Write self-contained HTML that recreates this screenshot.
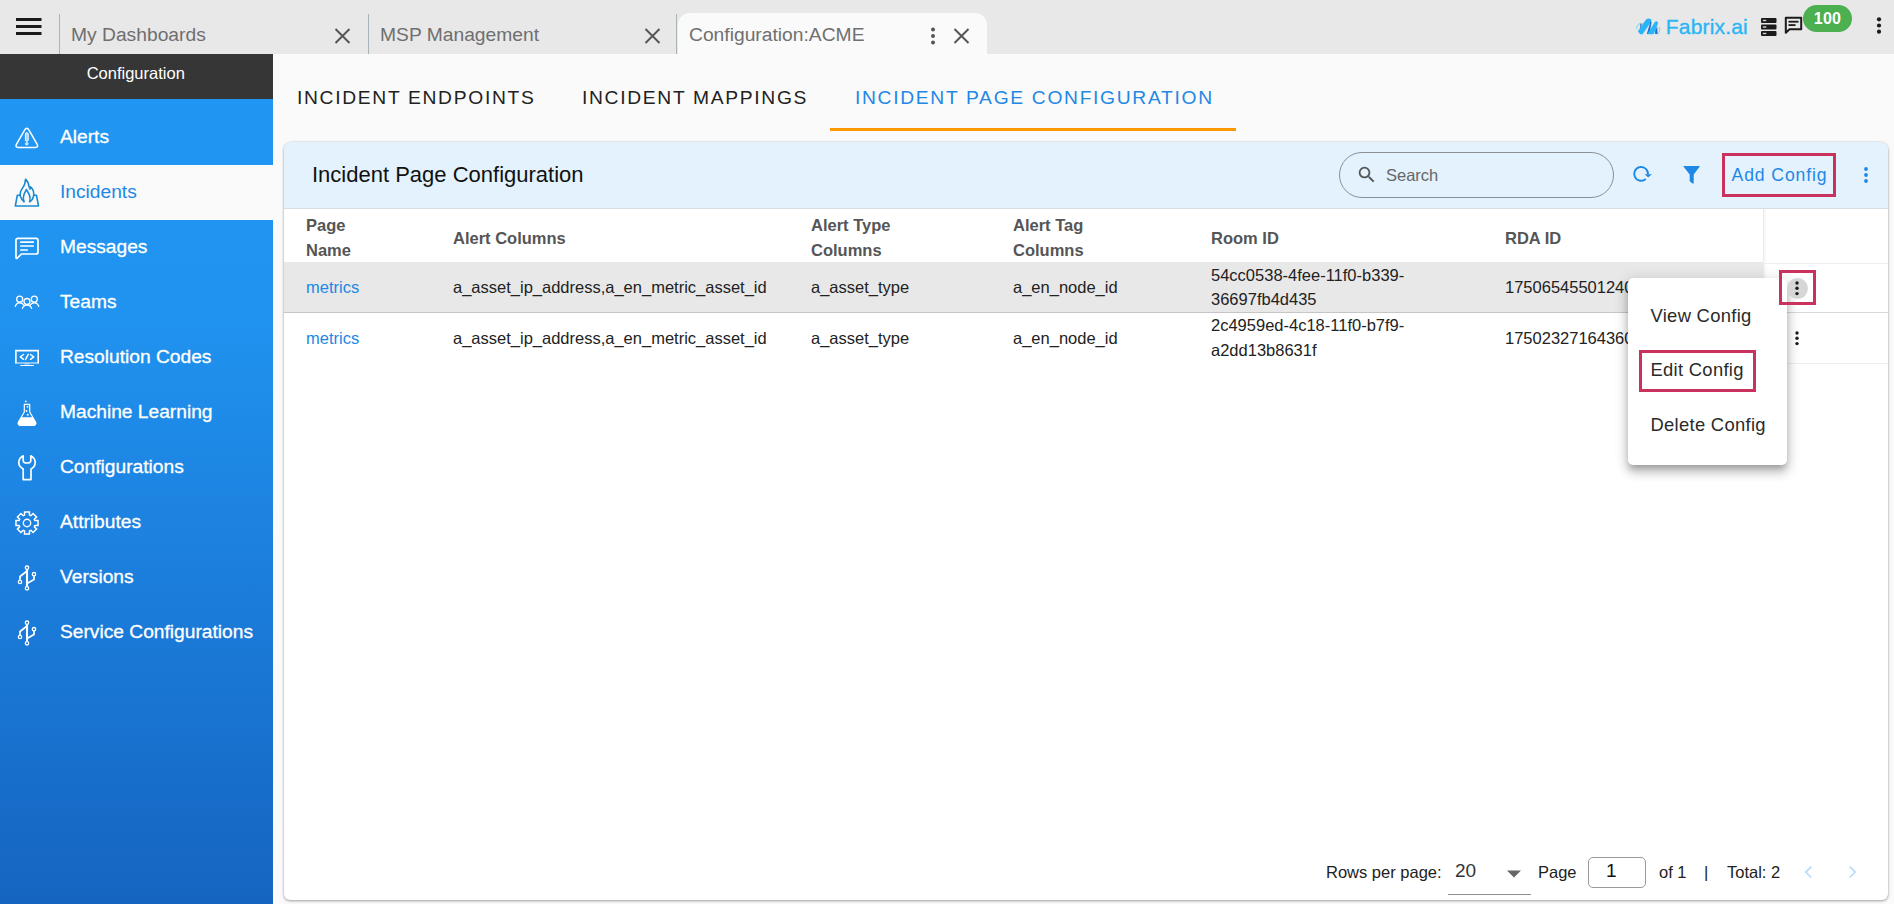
<!DOCTYPE html>
<html><head><meta charset="utf-8">
<style>
*{box-sizing:border-box;margin:0;padding:0}
html,body{width:1894px;height:904px;overflow:hidden;background:#fafafa;font-family:"Liberation Sans",sans-serif;color:#212121}
.abs{position:absolute}
#topbar{position:absolute;left:0;top:0;width:1894px;height:54px;background:#e8e8e8}
.tab{position:absolute;top:13px;height:41px;font-size:19.25px;color:#6f6f6f;line-height:44.4px;white-space:nowrap}
.tab .sep{position:absolute;left:0;top:1px;bottom:0;width:1px;background:#a9b3b8}
.tabx{position:absolute;top:13px}
#side{position:absolute;left:0;top:54px;width:273px;height:850px;background:linear-gradient(180deg,#2196f3 0%,#2093f0 30%,#1c7fdd 60%,#1565c0 100%)}
#sidehead{position:absolute;left:0;top:0;width:273px;height:44.5px;background:#363636;color:#fff;font-size:16.5px;text-align:center;line-height:38px;padding-right:1.5px}
.mi{position:absolute;left:0;width:273px;height:55px;color:#fff;font-size:19.2px;line-height:53.6px;-webkit-text-stroke:.3px #fff;padding-left:60px;white-space:nowrap}
.mi.sel{background:#fafafa;color:#1e88e5;-webkit-text-stroke:0}
.mi svg{position:absolute;left:13px;top:14px}
.nav{position:absolute;top:86.700px;font-size:19.25px;letter-spacing:1.68px;color:#212121;white-space:nowrap;line-height:22px}
#card{position:absolute;left:284px;top:142px;width:1604px;height:758px;background:#fff;border-radius:8px 8px 6px 6px;box-shadow:0 1px 3px rgba(0,0,0,.35),0 0 2px rgba(0,0,0,.12)}
#chead{position:absolute;left:0;top:0;width:1604px;height:67px;background:#e3f2fd;border-radius:8px 8px 0 0;border-bottom:1px solid #d5dde3}
#ctitle{position:absolute;left:28px;top:20px;font-size:22px;line-height:26px;color:#111;white-space:nowrap}
.th{position:absolute;font-size:16.5px;font-weight:700;color:#555;line-height:25px;white-space:nowrap}
.td{position:absolute;font-size:16.5px;color:#222;line-height:24px;white-space:nowrap}
.lnk{color:#1e88e5}
.pi{position:absolute;left:22.200px;font-size:18.400px;letter-spacing:.3px;line-height:24px;color:#2a2a2a;white-space:nowrap}
.ft{position:absolute;top:718px;font-size:16.5px;line-height:24px;color:#222;white-space:nowrap}
</style></head><body>
<div id="topbar">
  <svg class="abs" style="left:16px;top:18px" width="26" height="18"><rect x="0" y="0" width="25.5" height="3" fill="#1a1a1a"/><rect x="0" y="7" width="25.5" height="3" fill="#1a1a1a"/><rect x="0" y="14" width="25.5" height="3" fill="#1a1a1a"/></svg>
  <div class="tab" style="left:59px;width:309px"><span class="sep"></span><span style="margin-left:12px">My Dashboards</span></div>
  <div class="tab" style="left:368px;width:309px"><span class="sep"></span><span style="margin-left:12px">MSP Management</span></div>
  <div class="abs" style="left:676px;top:14px;width:1px;height:40px;background:#a9b3b8"></div>
  <div class="tab" style="left:677.500px;width:309px;background:#fafafa;border-radius:12px 12px 0 0"><span style="margin-left:11.500px">Configuration:ACME</span></div>

  <svg class="abs" style="left:334px;top:28px" width="17" height="16"><path d="M1.500 1 L15.500 15 M15.500 1 L1.500 15" stroke="#555" stroke-width="2" fill="none"/></svg>
  <svg class="abs" style="left:644px;top:28px" width="17" height="16"><path d="M1.500 1 L15.500 15 M15.500 1 L1.500 15" stroke="#555" stroke-width="2" fill="none"/></svg>
  <svg class="abs" style="left:953px;top:28px" width="17" height="16"><path d="M1.500 1 L15.500 15 M15.500 1 L1.500 15" stroke="#555" stroke-width="2" fill="none"/></svg>
  <svg class="abs" style="left:930px;top:27px" width="6" height="18"><circle cx="3" cy="2.500" r="2" fill="#555"/><circle cx="3" cy="9" r="2" fill="#555"/><circle cx="3" cy="15.500" r="2" fill="#555"/></svg>
  <!-- logo -->
  <svg class="abs" style="left:1630px;top:8px" width="40" height="38" viewBox="1630 8 40 38">
    <path d="M1637.800 31.300 L1645.800 19.800 Q1648 17.800 1650.800 19 Q1652 20 1651.300 21.500 L1642.600 34.300 L1640.200 34.300 Z" fill="#29b6f6"/>
    <path d="M1650.600 21.200 L1651.600 22.200 L1649.400 33.800 L1646.800 34 Z" fill="#1f6fd0"/>
    <path d="M1647.300 34.200 L1654.600 22.200 Q1656 20.800 1657.300 21.600 Q1658.200 22.500 1657.800 24 L1655.600 30 L1653.600 34.200 Z" fill="#29b6f6"/>
    <path d="M1655.400 30.300 L1657.300 26.500 L1657.500 34 L1655 34 Z" fill="#1f6fd0"/>
    <path d="M1639.800 24.500 L1642.500 22.800 L1640.200 28.500 Z" fill="#1f6fd0" fill-opacity=".8"/>
    <path d="M1636.600 29 C1636.400 25.500 1638.500 23.500 1641 23.200" fill="none" stroke="#29b6f6" stroke-width=".7" stroke-opacity=".7"/>
    <path d="M1659.300 27 C1660 30 1659.500 32.500 1657.300 34.600" fill="none" stroke="#29b6f6" stroke-width=".7" stroke-opacity=".7"/>
  </svg>
  <div class="abs" style="left:1665.800px;top:13.800px;font-size:21px;line-height:26px;color:#29b6f6;letter-spacing:.17px;-webkit-text-stroke:.35px #29b6f6;white-space:nowrap">Fabrix.ai</div>
  <svg class="abs" style="left:1761px;top:18px" width="16" height="19" viewBox="0 0 16 19"><rect x="0" y="0" width="15.500" height="5" rx="1" fill="#1b1b1b"/><rect x="0" y="6.500" width="15.500" height="5" rx="1" fill="#1b1b1b"/><rect x="0" y="13" width="15.500" height="5" rx="1" fill="#1b1b1b"/><rect x="1.800" y="1.800" width="3.500" height="1.400" fill="#d9d2c0"/><rect x="1.800" y="8.300" width="3.500" height="1.400" fill="#d9d2c0"/><rect x="1.800" y="14.800" width="3.500" height="1.400" fill="#d9d2c0"/></svg>
  <svg class="abs" style="left:1783.500px;top:15.700px" width="19" height="19" viewBox="0 0 19 19"><path d="M1.800 1.800 H17.200 V13.200 H5.500 L1.800 16.800 Z" fill="none" stroke="#1b1b1b" stroke-width="2" stroke-linejoin="round"/><rect x="4.500" y="4.800" width="10" height="1.800" fill="#1b1b1b"/><rect x="4.500" y="8.200" width="7" height="1.800" fill="#1b1b1b"/></svg>
  <div class="abs" style="left:1803px;top:5px;width:49px;height:27px;border-radius:13.500px;background:#4caf50;color:#fff;font-weight:700;font-size:16px;line-height:28px;text-align:center;letter-spacing:.3px">100</div>
  <svg class="abs" style="left:1875.500px;top:16px" width="6" height="20"><circle cx="3" cy="3.300" r="2.100" fill="#1b1b1b"/><circle cx="3" cy="9.500" r="2.100" fill="#1b1b1b"/><circle cx="3" cy="15.700" r="2.100" fill="#1b1b1b"/></svg>
</div>
<div id="side">
  <div id="sidehead">Configuration</div>
  <div class="mi" style="top:55.5px">Alerts</div>
  <div class="mi sel" style="top:110.5px">Incidents</div>
  <div class="mi" style="top:165.5px">Messages</div>
  <div class="mi" style="top:220.5px">Teams</div>
  <div class="mi" style="top:275.5px">Resolution Codes</div>
  <div class="mi" style="top:330.5px">Machine Learning</div>
  <div class="mi" style="top:385.5px">Configurations</div>
  <div class="mi" style="top:440.5px">Attributes</div>
  <div class="mi" style="top:495.5px">Versions</div>
  <div class="mi" style="top:550.5px">Service Configurations</div>
</div>

<!-- sidebar icons -->
<svg class="abs" style="left:15px;top:127px" width="24" height="22" viewBox="0 0 24 22" fill="none" stroke="#fff"><path d="M9.600 3.200 Q11.800 -0.600 14 3.200 L22.200 17.400 Q23.500 20.400 20.400 20.400 L3.200 20.400 Q0.100 20.400 1.400 17.400 Z" stroke-width="1.500"/><rect x="10.400" y="5.800" width="2.800" height="8.400" rx="1.200" stroke-width="1" fill="#fff" fill-opacity=".6"/><circle cx="11.800" cy="16.700" r="1.200" stroke-width="1" fill="#fff" fill-opacity=".5"/></svg>
<svg class="abs" style="left:10px;top:174px" width="36" height="36" viewBox="0 0 36 36" fill="none" stroke="#1b8ad0" stroke-width="1.600" stroke-linejoin="round" stroke-linecap="round"><path d="M9.600 21.300 H7.300 L5.300 32 H28.500 L26.500 21.300 H24"/><path d="M14 27.600 C11 25 9.500 21.500 10.500 18 C11.300 15 14 13 14.800 9.500 C15.200 7.800 15.300 6.500 15.500 5.200 C17.500 7 18.800 9.500 19 13 C20 12.600 20.800 13 21.500 13.800 C23.500 16 24.200 19 23.500 22.500 C23 24.800 21.800 26.500 20 27.600"/><path d="M14 27.600 C13 25.500 13 23 14 20.500 C14.800 18.500 15.800 17 16.300 15.500 C17.500 17.500 19 19.500 19.600 21.500 C20.200 23.500 20.200 25.500 19.600 27.600"/><circle cx="20.100" cy="14.600" r="0.800" fill="#1b8ad0" stroke-width="1"/></svg>
<svg class="abs" style="left:8px;top:228px" width="40" height="40" viewBox="0 0 40 40" fill="none" stroke="#fff" stroke-linecap="round" stroke-linejoin="round"><path d="M10 10.300 H28 Q30 10.300 30 12.300 V24 Q30 26 28 26 H13.500 L9 30.300 Q8 30.800 8 29.500 V12.300 Q8 10.300 10 10.300 Z" stroke-width="1.700"/><path d="M12.800 14.100 H25.200 M12.800 18 H25.200 M12.800 22 H19.200" stroke-width="1.700"/></svg>
<svg class="abs" style="left:8px;top:282px" width="40" height="40" viewBox="0 0 40 40" fill="none" stroke="#fff" stroke-width="1.300" stroke-linecap="round"><circle cx="11.700" cy="17.200" r="3"/><circle cx="26.300" cy="17.200" r="3"/><circle cx="19" cy="19.500" r="3"/><path d="M7.300 24.300 C8 22 9.500 20.800 11.700 20.800 C13.500 20.800 15 21.700 16 23.200"/><path d="M30.700 24.300 C30 22 28.500 20.800 26.300 20.800 C24.500 20.800 23 21.700 22 23.200"/><path d="M14.400 26.400 C15.200 24.200 16.800 23.100 19 23.100 C21.200 23.100 22.800 24.200 23.600 26.400"/></svg>
<svg class="abs" style="left:8px;top:338px" width="40" height="40" viewBox="0 0 40 40" fill="none" stroke="#fff" stroke-linecap="round" stroke-linejoin="round"><path d="M7.900 25.200 V12.600 H30.200 V25.200" stroke-width="1.600" stroke-linecap="butt" stroke-linejoin="miter"/><path d="M7.100 25 H31" stroke-width="1.600" stroke-opacity=".6" stroke-linecap="butt"/><path d="M12.800 27.500 H25.400" stroke-width="1.200"/><path d="M16.500 26 H21.500" stroke-width="1.400" stroke-opacity=".45" stroke-linecap="butt"/><path d="M15.500 16.500 L12.300 18.800 L15.500 21.300 M20.200 16.300 L17.600 21.500 M22.500 16.500 L25.700 18.800 L22.500 21.300" stroke-width="1.500"/></svg>
<svg class="abs" style="left:8px;top:392px" width="40" height="40" viewBox="0 0 40 40" fill="none" stroke="#fff" stroke-linejoin="round"><path d="M16.300 20 V12.400 H21.700 V20 L27.500 30 Q28.600 33.400 25.500 33.400 H12.500 Q9.400 33.400 10.500 30 Z" stroke-width="1.200"/><path d="M13.200 25.800 H24.800 L27.500 30 Q28.600 33.400 25.500 33.400 H12.500 Q9.400 33.400 10.500 30 Z" fill="#fff" stroke-width="1"/><circle cx="17.800" cy="9.300" r="0.900" fill="#fff" stroke="none"/><circle cx="19.500" cy="14.800" r="0.900" fill="#fff" stroke="none"/><circle cx="18.500" cy="19" r="0.900" fill="#fff" stroke="none"/><circle cx="19.800" cy="22.800" r="1" fill="#fff" stroke="none"/></svg>
<svg class="abs" style="left:8px;top:447px" width="40" height="40" viewBox="0 0 40 40" fill="none" stroke="#fff" stroke-width="1.700" stroke-linejoin="round"><path d="M15.200 8.800 C12 10.500 10.800 13 10.800 15.500 C10.800 18.500 12.500 20.500 15.200 22 V32.600 H23 V22 C25.800 20.500 27.200 18.500 27.200 15.500 C27.200 13 26 10.500 22.800 8.800 V13.500 C22.800 15.500 21.200 16 19 16 C16.800 16 15.200 15.500 15.200 13.500 Z"/></svg>
<svg class="abs" style="left:8px;top:502px" width="40" height="40" viewBox="0 0 40 40" fill="none" stroke="#fff" stroke-linejoin="miter"><path d="M16.55 13.07 L16.53 9.97 L21.47 9.97 L21.45 13.07 L22.87 13.66 L25.05 11.46 L28.54 14.95 L26.34 17.13 L26.93 18.55 L30.03 18.53 L30.03 23.47 L26.93 23.45 L26.34 24.87 L28.54 27.05 L25.05 30.54 L22.87 28.34 L21.45 28.93 L21.47 32.03 L16.53 32.03 L16.55 28.93 L15.13 28.34 L12.95 30.54 L9.46 27.05 L11.66 24.87 L11.07 23.45 L7.97 23.47 L7.97 18.53 L11.07 18.55 L11.66 17.13 L9.46 14.95 L12.95 11.46 L15.13 13.66 Z" stroke-width="1.500"/><circle cx="19" cy="21" r="3.700" stroke-width="1.400"/></svg>
<svg class="abs" style="left:8px;top:557px" width="40" height="40" viewBox="0 0 40 40" fill="none" stroke="#fff" stroke-linecap="round" stroke-linejoin="round"><path d="M19 12.500 V29.500" stroke-width="2.100" stroke-linecap="butt"/><path d="M19 14 L12 19.500 V23.200" stroke-width="1.700"/><path d="M26 19 V22.500 L19 26.500" stroke-width="1.700"/><circle cx="19" cy="10.700" r="1.700" stroke-width="1.300"/><circle cx="19" cy="31.300" r="1.700" stroke-width="1.300"/><circle cx="12" cy="25" r="1.700" stroke-width="1.300"/><circle cx="26" cy="17.200" r="1.700" stroke-width="1.300"/></svg>
<svg class="abs" style="left:8px;top:612px" width="40" height="40" viewBox="0 0 40 40" fill="none" stroke="#fff" stroke-linecap="round" stroke-linejoin="round"><path d="M19 12.500 V29.500" stroke-width="2.100" stroke-linecap="butt"/><path d="M19 14 L12 19.500 V23.200" stroke-width="1.700"/><path d="M26 19 V22.500 L19 26.500" stroke-width="1.700"/><circle cx="19" cy="10.700" r="1.700" stroke-width="1.300"/><circle cx="19" cy="31.300" r="1.700" stroke-width="1.300"/><circle cx="12" cy="25" r="1.700" stroke-width="1.300"/><circle cx="26" cy="17.200" r="1.700" stroke-width="1.300"/></svg>
<div class="nav" style="left:297px">INCIDENT ENDPOINTS</div>
<div class="nav" style="left:582px">INCIDENT MAPPINGS</div>
<div class="nav" style="left:855px;color:#1e88e5">INCIDENT PAGE CONFIGURATION</div>
<div class="abs" style="left:830px;top:128px;width:406px;height:3px;background:#ff9800"></div>
<div id="card">

  <div id="chead"><div id="ctitle">Incident Page Configuration</div>
    <div class="abs" style="left:1055px;top:10px;width:275px;height:46px;border:1px solid #8a8f94;border-radius:23px"></div>
    <svg class="abs" style="left:1071.500px;top:22px" width="21.500" height="21.500" viewBox="0 0 24 24"><path fill="#555" d="M15.5 14h-.79l-.28-.27A6.471 6.471 0 0 0 16 9.5 6.5 6.5 0 1 0 9.500 16c1.610 0 3.090-.59 4.230-1.570l.27.28v.79l5 4.990L20.490 19l-4.990-5zm-6 0C7.010 14 5 11.990 5 9.500S7.010 5 9.500 5 14 7.010 14 9.500 11.990 14 9.500 14z"/></svg>
    <div class="abs" style="left:1102px;top:21px;font-size:16.5px;line-height:24px;color:#666">Search</div>
    <svg class="abs" style="left:0;top:0" width="1604" height="66"><path d="M1361.81 36.95 A6.9 6.9 0 1 1 1364.00 32.20" fill="none" stroke="#1e88e5" stroke-width="1.900"/><path d="M1360.60 32.20 H1367.90 L1364.20 35.60 Z" fill="#1e88e5"/></svg>
    <svg class="abs" style="left:0;top:0" width="1604" height="66"><path d="M1399.40 24.00 H1415.70 V24.60 L1409.70 32.60 V41.60 H1408.60 L1405.70 39.30 V32.60 L1399.40 24.60 Z" fill="#1e88e5"/></svg>
    <div class="abs" style="left:1438px;top:11px;width:114px;height:44px;border:3px solid #c9325c"></div>
    <div class="abs" style="left:1447.500px;top:21px;font-size:17.600px;letter-spacing:.9px;line-height:24px;color:#1e88e5;white-space:nowrap">Add Config</div>
    <svg class="abs" style="left:1579px;top:25px" width="6" height="16"><circle cx="3" cy="2" r="1.900" fill="#1e88e5"/><circle cx="3" cy="8" r="1.900" fill="#1e88e5"/><circle cx="3" cy="14" r="1.900" fill="#1e88e5"/></svg>
  </div>
  <!-- table -->
  <div class="abs" style="left:0;top:120px;width:1479px;height:50px;background:#e8e8e8"></div>
  <div class="abs" style="left:0;top:169.500px;width:1479px;height:1px;background:#c6c6c6"></div>
  <div class="abs" style="left:1479px;top:67px;width:4px;height:154px;background:linear-gradient(90deg,rgba(0,0,0,.10),rgba(0,0,0,.03) 40%,rgba(0,0,0,0))"></div>
  <div class="abs" style="left:1480px;top:121px;width:124px;height:1px;background:#efefef"></div>
  <div class="abs" style="left:1480px;top:170px;width:124px;height:1px;background:#d8d8d8"></div>
  <div class="abs" style="left:1480px;top:221px;width:124px;height:1px;background:#efefef"></div>
  <div class="th" style="left:22px;top:71px">Page<br>Name</div>
  <div class="th" style="left:169px;top:83.500px">Alert Columns</div>
  <div class="th" style="left:527px;top:71px">Alert Type<br>Columns</div>
  <div class="th" style="left:729px;top:71px">Alert Tag<br>Columns</div>
  <div class="th" style="left:927px;top:83.500px">Room ID</div>
  <div class="th" style="left:1221px;top:83.500px">RDA ID</div>
  <div class="td lnk" style="left:22px;top:133px">metrics</div>
  <div class="td" style="left:169px;top:133px">a_asset_ip_address,a_en_metric_asset_id</div>
  <div class="td" style="left:527px;top:133px">a_asset_type</div>
  <div class="td" style="left:729px;top:133px">a_en_node_id</div>
  <div class="td" style="left:927px;top:121px">54cc0538-4fee-11f0-b339-<br>36697fb4d435</div>
  <div class="td" style="left:1221px;top:133px">17506545501240</div>
  <div class="td lnk" style="left:22px;top:184px">metrics</div>
  <div class="td" style="left:169px;top:184px">a_asset_ip_address,a_en_metric_asset_id</div>
  <div class="td" style="left:527px;top:184px">a_asset_type</div>
  <div class="td" style="left:729px;top:184px">a_en_node_id</div>
  <div class="td" style="left:927px;top:170.700px;line-height:25px">2c4959ed-4c18-11f0-b7f9-<br>a2dd13b8631f</div>
  <div class="td" style="left:1221px;top:184px">17502327164360</div>
  <!-- popup -->
  <div class="abs" style="left:1344.300px;top:136px;width:158.400px;height:187px;background:#fff;border-radius:5px;box-shadow:0 5px 6px -2px rgba(0,0,0,.22),0 3px 14px 2px rgba(0,0,0,.14),0 8px 10px 1px rgba(0,0,0,.12)">
    <div class="pi" style="top:25.500px">View Config</div>
    <div class="pi" style="top:80.300px">Edit Config</div>
    <div class="pi" style="top:135.300px">Delete Config</div>
    <div class="abs" style="left:10.700px;top:72px;width:116.800px;height:42px;border:3px solid #c9325c"></div>
  </div>
  <!-- row actions -->
  <div class="abs" style="left:1495px;top:128px;width:37px;height:35px;border:3px solid #c9325c"></div>
  <div class="abs" style="left:1502.800px;top:136.200px;width:20.800px;height:20.800px;border-radius:10.400px;background:#d6d6d6"></div>
  <svg class="abs" style="left:1510.200px;top:139.300px" width="6" height="16"><circle cx="3" cy="2" r="1.700" fill="#1a1a1a"/><circle cx="3" cy="7.300" r="1.700" fill="#1a1a1a"/><circle cx="3" cy="12.600" r="1.700" fill="#1a1a1a"/></svg>
  <svg class="abs" style="left:1510.200px;top:189.100px" width="6" height="16"><circle cx="3" cy="2" r="1.700" fill="#1a1a1a"/><circle cx="3" cy="7.300" r="1.700" fill="#1a1a1a"/><circle cx="3" cy="12.600" r="1.700" fill="#1a1a1a"/></svg>
  <!-- footer -->
  <div class="ft" style="left:1042px">Rows per page:</div>
  <div class="ft" style="left:1171px;font-size:19px;top:717px;color:#333">20</div>
  <div class="abs" style="left:1164px;top:751.500px;width:83px;height:1px;background:#8f8f8f"></div>
  <svg class="abs" style="left:1222px;top:728px" width="16" height="8"><path d="M1 0.500 H15 L8 7.500 Z" fill="#666"/></svg>
  <div class="ft" style="left:1254px">Page</div>
  <div class="abs" style="left:1304px;top:715px;width:58px;height:31px;border:1px solid #9a9a9a;border-radius:5px;background:#fff"></div>
  <div class="ft" style="left:1322px;font-size:19px;top:717px;color:#111">1</div>
  <div class="ft" style="left:1375px">of 1</div>
  <div class="ft" style="left:1420px">|</div>
  <div class="ft" style="left:1443px">Total: 2</div>
  <svg class="abs" style="left:1518px;top:722px" width="12" height="16"><path d="M9.300 2.700 L3.800 8.100 L9.300 13.500" fill="none" stroke="#b9dbf7" stroke-width="1.700"/></svg>
  <svg class="abs" style="left:1562px;top:722px" width="12" height="16"><path d="M3.700 2.700 L9.200 8.100 L3.700 13.500" fill="none" stroke="#b9dbf7" stroke-width="1.700"/></svg>
</div>
</body></html>
